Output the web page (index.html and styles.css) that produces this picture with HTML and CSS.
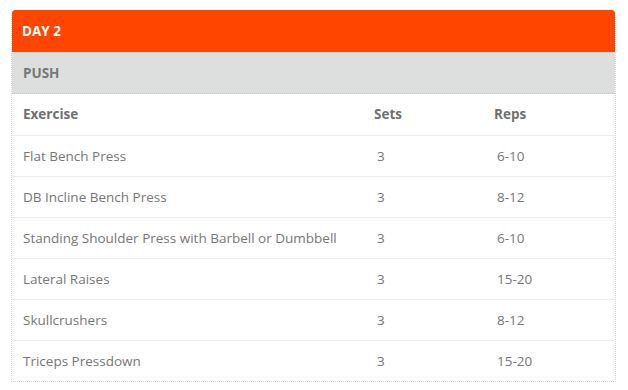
FILE: index.html
```html
<!DOCTYPE html>
<html>
<head>
<meta charset="utf-8">
<link rel="stylesheet" href="styles.css">
</head>
<body>
<div class="card">
  <div class="day">DAY 2</div>
  <div class="split">PUSH</div>
  <table class="plan">
    <colgroup>
      <col class="c-ex">
      <col class="c-sets">
      <col class="c-reps">
    </colgroup>
    <thead>
      <tr><th>Exercise</th><th>Sets</th><th>Reps</th></tr>
    </thead>
    <tbody>
      <tr><td>Flat Bench Press</td><td class="num">3</td><td class="num">6-10</td></tr>
      <tr><td>DB Incline Bench Press</td><td class="num">3</td><td class="num">8-12</td></tr>
      <tr><td>Standing Shoulder Press with Barbell or Dumbbell</td><td class="num">3</td><td class="num">6-10</td></tr>
      <tr><td>Lateral Raises</td><td class="num">3</td><td class="num">15-20</td></tr>
      <tr><td>Skullcrushers</td><td class="num">3</td><td class="num">8-12</td></tr>
      <tr><td>Triceps Pressdown</td><td class="num">3</td><td class="num">15-20</td></tr>
    </tbody>
  </table>
</div>
</body>
</html>
```
FILE: styles.css
```css
html, body {
  margin: 0;
  padding: 0;
  background: #fff;
}
body {
  padding: 10px 14px 0 11px;
  font-family: "Open Sans", "Liberation Sans", sans-serif;
  font-size: 13.5px;
  color: #777;
}
.card {
  width: 603px;
  border: 1px dotted #d6d6d6;
  border-top: none;
  border-radius: 4px 4px 0 0;
  overflow: hidden;
}
.day {
  background: #ff4500;
  color: #fff;
  font-weight: 700;
  height: 42px;
  line-height: 42px;
  padding-left: 11px;
  border-radius: 4px 4px 0 0;
  margin: 0 -1px;
}
.split {
  background: #dddfde;
  color: #777;
  font-weight: 700;
  height: 42px;
  line-height: 42px;
  padding-left: 11px;
  border-bottom: 1px dotted #c8c8c8;
  box-sizing: border-box;
}
.plan {
  width: 100%;
  border-collapse: collapse;
  table-layout: fixed;
}
.c-ex { width: 351px; }
.c-sets { width: 120px; }
.c-reps { width: 132px; }
.plan th, .plan td {
  height: 41px;
  padding: 0 0 0 11px;
  text-align: left;
  box-sizing: border-box;
  border-top: 1px solid #ececec;
}
.plan thead th {
  border-top: none;
  font-weight: 700;
  color: #707070;
}
.plan td {
  color: #777;
}
.plan td.num {
  padding-left: 14px;
}
```
